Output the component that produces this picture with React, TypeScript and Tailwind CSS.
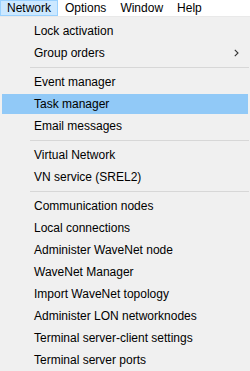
import React from "react";

type Entry = { label: string; sub?: boolean; active?: boolean } | "sep";

const entries: Entry[] = [
  { label: "Lock activation" },
  { label: "Group orders", sub: true },
  "sep",
  { label: "Event manager" },
  { label: "Task manager", active: true },
  { label: "Email messages" },
  "sep",
  { label: "Virtual Network" },
  { label: "VN service (SREL2)" },
  "sep",
  { label: "Communication nodes" },
  { label: "Local connections" },
  { label: "Administer WaveNet node" },
  { label: "WaveNet Manager" },
  { label: "Import WaveNet topology" },
  { label: "Administer LON networknodes" },
  { label: "Terminal server-client settings" },
  { label: "Terminal server ports" },
];

export default function App() {
  return (
    <div
      className="w-[250px] h-[371px] overflow-hidden bg-[#f0f0f0] text-[12px] text-black"
      style={{ fontFamily: '"Segoe UI", "Liberation Sans", Arial, sans-serif' }}
    >
      <div className="h-[17px] bg-white flex items-start border-b border-[#e9e9e9]">
        <div className="h-[16px] px-[6px] border border-[#99d1ff] bg-[#cce8ff] flex items-center leading-none">
          Network
        </div>
        <div className="h-[16px] px-[6px] border border-transparent flex items-center leading-none">
          Options
        </div>
        <div className="h-[16px] px-[6px] border border-transparent flex items-center leading-none">
          Window
        </div>
        <div className="h-[16px] px-[6px] border border-transparent flex items-center leading-none">
          Help
        </div>
      </div>
      <div className="pt-[3px] flex flex-col">
        {entries.map((e, i) =>
          e === "sep" ? (
            <div key={i} className="h-[7px] flex items-center pl-[30px] pr-[1px]">
              <div className="h-px w-full bg-[#d7d7d7]" />
            </div>
          ) : (
            <div key={i} className="h-[22px] py-[1px] px-[2px]">
              <div
                className={
                  "h-full flex items-center pl-[32px] pr-[8px] leading-none " +
                  (e.active ? "bg-[#91c9f7]" : "")
                }
              >
                <span className="flex-1">{e.label}</span>
                {e.sub && (
                  <svg width="5" height="8" viewBox="0 0 5 8" className="mr-[1px]">
                    <path d="M0.8 0.8 L4 4 L0.8 7.2" fill="none" stroke="#333" strokeWidth="1.1" />
                  </svg>
                )}
              </div>
            </div>
          )
        )}
      </div>
    </div>
  );
}
